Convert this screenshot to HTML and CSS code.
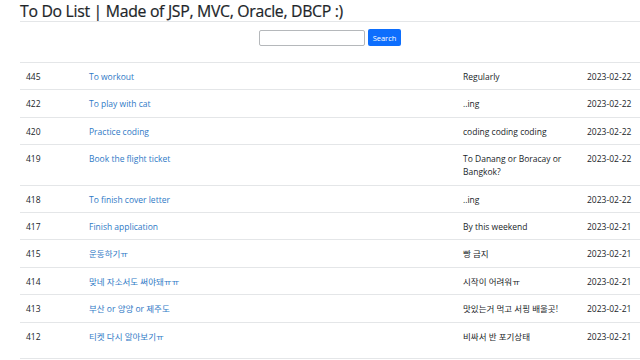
FILE: index.html
```
<!DOCTYPE html>
<html lang="ko">
<head>
<meta charset="utf-8">
<title>To Do List</title>
<link rel="stylesheet" href="styles.css">
</head>
<body>
<div class="container">
  <h2 class="title">To Do List | Made of JSP, MVC, Oracle, DBCP :)</h2>
  <form class="search">
    <input class="search-input" type="text">
    <button class="search-btn" type="button">Search</button>
  </form>
  <table class="todo">
    <colgroup>
      <col class="c-id"><col class="c-title"><col class="c-content"><col class="c-date">
    </colgroup>
    <tbody>
      <tr><td>445</td><td><a href="#">To workout</a></td><td>Regularly</td><td>2023-02-22</td></tr>
      <tr><td>422</td><td><a href="#">To play with cat</a></td><td>..ing</td><td>2023-02-22</td></tr>
      <tr><td>420</td><td><a href="#">Practice coding</a></td><td>coding coding coding</td><td>2023-02-22</td></tr>
      <tr><td>419</td><td><a href="#">Book the flight ticket</a></td><td>To Danang or Boracay or Bangkok?</td><td>2023-02-22</td></tr>
      <tr><td>418</td><td><a href="#">To finish cover letter</a></td><td>..ing</td><td>2023-02-22</td></tr>
      <tr><td>417</td><td><a href="#">Finish application</a></td><td>By this weekend</td><td>2023-02-21</td></tr>
      <tr><td>415</td><td><a href="#">운동하기ㅠ</a></td><td>빵 금지</td><td>2023-02-21</td></tr>
      <tr><td>414</td><td><a href="#">맞네 자소서도 써야돼ㅠㅠ</a></td><td>시작이 어려워ㅠ</td><td>2023-02-21</td></tr>
      <tr><td>413</td><td><a href="#">부산 or 양양 or 제주도</a></td><td>맛있는거 먹고 서핑 배울곳!</td><td>2023-02-21</td></tr>
      <tr class="tall"><td>412</td><td><a href="#">티켓 다시 알아보기ㅠ</a></td><td>비싸서 반 포기상태</td><td>2023-02-21</td></tr>
    </tbody>
  </table>
</div>
</body>
</html>
```
FILE: styles.css
```
html, body {
  margin: 0;
  padding: 0;
  background: #fff;
}
body {
  font-family: "Open Sans", "Noto Sans", "Noto Sans CJK KR", sans-serif;
  color: #212529;
  overflow: hidden;
}
.container {
  margin-left: 20px;
  width: 620px;
}
.title {
  margin: 0;
  padding-top: 1px;
  font-size: 15.8px;
  font-weight: 500;
  line-height: 20px;
  color: #212529;
  border-bottom: 1px solid #e4e6e8;
  letter-spacing: -0.3px;
  -webkit-text-stroke: 0.2px #212529;
}
.search {
  display: flex;
  justify-content: center;
  align-items: center;
  gap: 3px;
  margin-top: 7px;
  height: 17px;
  padding-bottom: 16px;
  border-bottom: 1px solid #e4e6e8;
}
.search-input {
  box-sizing: border-box;
  width: 106px;
  height: 16px;
  margin: 0;
  border: 1px solid #b5b8bb;
  border-radius: 2px;
  padding: 0;
}
.search-btn {
  box-sizing: border-box;
  width: 33px;
  height: 17px;
  margin: 0;
  padding: 0;
  border: none;
  border-radius: 2px;
  background: #0d6efd;
  color: #fff;
  font-family: inherit;
  font-size: 7.5px;
}
.todo {
  width: 620px;
  border-collapse: collapse;
  table-layout: fixed;
  font-size: 8.5px;
  line-height: 13px;
}
.c-id { width: 63px; }
.c-title { width: 374px; }
.c-content { width: 124px; }
.c-date { width: 59px; }
.todo td {
  padding: 7px 6px 6.4px;
  border-bottom: 1px solid #e4e6e8;
  vertical-align: top;
  color: #212529;
}
.todo td:last-child {
  padding-left: 6px;
  padding-right: 0;
  text-align: left;
}
.todo a {
  color: #2f7ac6;
  text-decoration: none;
}
.todo tr.tall td {
  padding-bottom: 15px;
}
```
